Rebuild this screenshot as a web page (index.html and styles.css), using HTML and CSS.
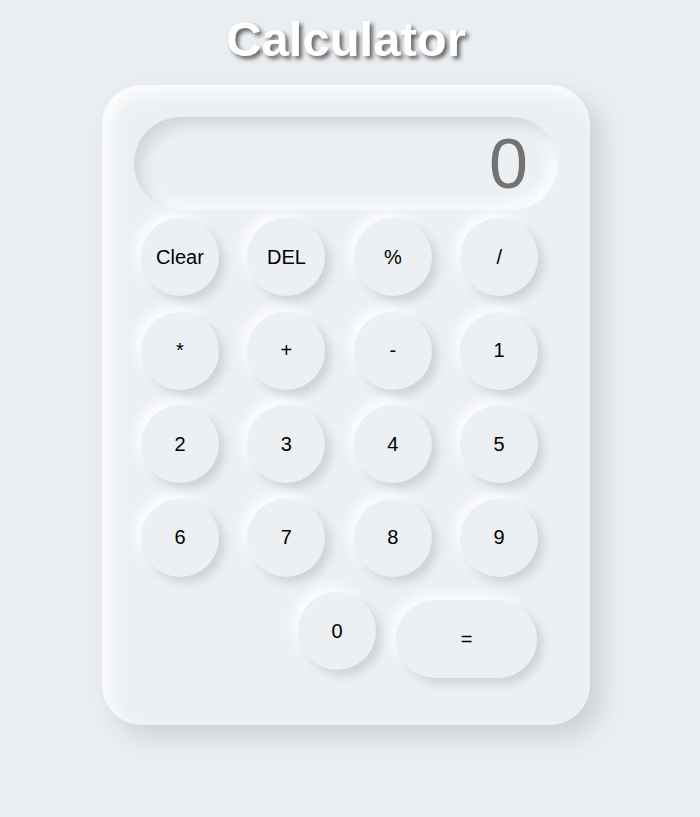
FILE: index.html
```html
<!DOCTYPE html>
<html lang="en">
<head>
<meta charset="utf-8">
<title>Calculator</title>
<link rel="stylesheet" href="styles.css">
</head>
<body>
<main class="page">
  <h1 class="title">Calculator</h1>
  <div class="calc">
    <div class="display"><span class="value">0</span></div>
    <div class="keys">
      <button class="key">Clear</button>
      <button class="key">DEL</button>
      <button class="key">%</button>
      <button class="key">/</button>
      <button class="key">*</button>
      <button class="key">+</button>
      <button class="key">-</button>
      <button class="key">1</button>
      <button class="key">2</button>
      <button class="key">3</button>
      <button class="key">4</button>
      <button class="key">5</button>
      <button class="key">6</button>
      <button class="key">7</button>
      <button class="key">8</button>
      <button class="key">9</button>
      <div class="last-row">
        <button class="key">0</button>
        <button class="key key-wide">=</button>
      </div>
    </div>
  </div>
</main>
</body>
</html>
```
FILE: styles.css
```css
* { box-sizing: border-box; }

html, body {
  margin: 0;
  padding: 0;
  background: #ebeef1;
  font-family: "Liberation Sans", Arial, sans-serif;
}

.page {
  display: flex;
  flex-direction: column;
  align-items: center;
  padding-right: 8px;
  min-height: 817px;
}

.title {
  margin: 12px 0 18px;
  font-size: 49px;
  line-height: 55px;
  font-weight: 700;
  color: #ffffff;
  text-shadow: 3px 3px 4px rgba(0, 0, 0, 0.6);
}

.calc {
  width: 488px;
  padding: 32px 32px 47px;
  border-radius: 40px;
  background: #edf0f3;
  box-shadow: 12px 12px 24px #cdd1d6, inset 8px 8px 16px #fbfcfd;
}

.display {
  height: 93px;
  border-radius: 47px;
  background: #ecf0f3;
  box-shadow: inset 8px 8px 14px #d3d7dc, inset -8px -8px 14px #fbfcfd;
  display: flex;
  align-items: center;
  justify-content: flex-end;
  padding-right: 30px;
}

.value {
  font-size: 70px;
  line-height: 1;
  color: #737373;
}

.keys {
  margin: 8px 0 0 7px;
  display: grid;
  grid-template-columns: repeat(4, 78px);
  column-gap: 28.4px;
  row-gap: 15.6px;
}

.key {
  width: 78px;
  height: 78px;
  border: none;
  border-radius: 39px;
  background: #ecf0f3;
  color: #000;
  font-family: "Liberation Sans", Arial, sans-serif;
  font-size: 20px;
  padding: 0;
  box-shadow: 6px 6px 10px #cfd3d8, -6px -6px 10px #fbfcfd;
}

.last-row {
  grid-column: 1 / -1;
  display: flex;
  align-items: flex-start;
  gap: 20px;
  padding-left: 157px;
}

.key-wide {
  width: 141px;
  margin-top: 8px;
}
```
